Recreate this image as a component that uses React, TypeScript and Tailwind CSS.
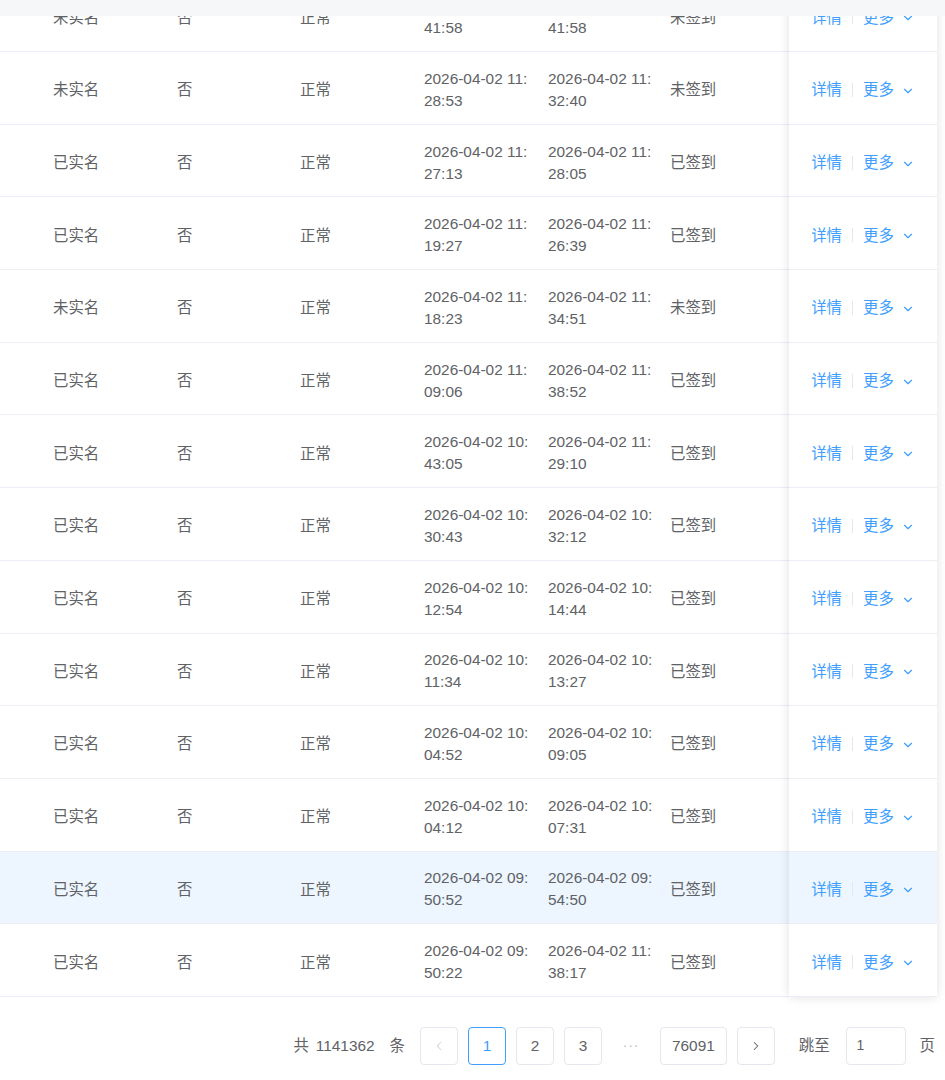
import { ChevronDown, ChevronLeft, ChevronRight } from "lucide-react";

type Row = {
  realName: string;
  flag: string;
  status: string;
  start: string;
  end: string;
  sign: string;
};

const rows: Row[] = [
  { realName: "未实名", flag: "否", status: "正常", start: "2026-04-02 11:41:58", end: "2026-04-02 11:41:58", sign: "未签到" },
  { realName: "未实名", flag: "否", status: "正常", start: "2026-04-02 11:28:53", end: "2026-04-02 11:32:40", sign: "未签到" },
  { realName: "已实名", flag: "否", status: "正常", start: "2026-04-02 11:27:13", end: "2026-04-02 11:28:05", sign: "已签到" },
  { realName: "已实名", flag: "否", status: "正常", start: "2026-04-02 11:19:27", end: "2026-04-02 11:26:39", sign: "已签到" },
  { realName: "未实名", flag: "否", status: "正常", start: "2026-04-02 11:18:23", end: "2026-04-02 11:34:51", sign: "未签到" },
  { realName: "已实名", flag: "否", status: "正常", start: "2026-04-02 11:09:06", end: "2026-04-02 11:38:52", sign: "已签到" },
  { realName: "已实名", flag: "否", status: "正常", start: "2026-04-02 10:43:05", end: "2026-04-02 11:29:10", sign: "已签到" },
  { realName: "已实名", flag: "否", status: "正常", start: "2026-04-02 10:30:43", end: "2026-04-02 10:32:12", sign: "已签到" },
  { realName: "已实名", flag: "否", status: "正常", start: "2026-04-02 10:12:54", end: "2026-04-02 10:14:44", sign: "已签到" },
  { realName: "已实名", flag: "否", status: "正常", start: "2026-04-02 10:11:34", end: "2026-04-02 10:13:27", sign: "已签到" },
  { realName: "已实名", flag: "否", status: "正常", start: "2026-04-02 10:04:52", end: "2026-04-02 10:09:05", sign: "已签到" },
  { realName: "已实名", flag: "否", status: "正常", start: "2026-04-02 10:04:12", end: "2026-04-02 10:07:31", sign: "已签到" },
  { realName: "已实名", flag: "否", status: "正常", start: "2026-04-02 09:50:52", end: "2026-04-02 09:54:50", sign: "已签到" },
  { realName: "已实名", flag: "否", status: "正常", start: "2026-04-02 09:50:22", end: "2026-04-02 11:38:17", sign: "已签到" },
];

// row that is highlighted (current row)
const HOVER = 12;

function DateCell({ value }: { value: string }) {
  return (
    <div className="leading-[22px]">
      <div>{value.slice(0, 14)}</div>
      <div>{value.slice(14)}</div>
    </div>
  );
}

function PageButton({ children, active, wide }: { children: React.ReactNode; active?: boolean; wide?: boolean }) {
  return (
    <div
      className={`flex h-[38px] items-center justify-center rounded-[4px] border bg-white ${wide ? "px-[11px]" : "w-[38px]"} ${
        active ? "border-[#409eff] text-[#409eff]" : "border-[#e4e7ed] text-[#606266]"
      }`}
    >
      {children}
    </div>
  );
}

export default function App() {
  return (
    <div
      className="relative h-[1080px] w-[945px] overflow-hidden bg-white text-[15.4px] text-[#606266]"
      style={{ fontFamily: '"Liberation Sans", "Noto Sans CJK SC", sans-serif' }}
    >
      <div className="absolute left-0 right-0 top-0 z-20 h-[16px] bg-[#f6f7f9]" />

      <div className="mt-[-20.7px] flex w-[937px]">
        <div className="min-w-0 flex-1 overflow-hidden">
          {rows.map((row, i) => (
            <div
              key={i}
              className={`flex h-[72.7px] items-center border-b border-[#ebeef5] pt-[4px] ${i === HOVER ? "bg-[#edf6ff]" : "bg-white"}`}
            >
              <div className="w-[42px] shrink-0" />
              <div className="w-[124px] shrink-0 pl-[11px]">{row.realName}</div>
              <div className="w-[123px] shrink-0 pl-[11px]">{row.flag}</div>
              <div className="w-[124px] shrink-0 pl-[11px]">{row.status}</div>
              <div className="w-[124px] shrink-0 pl-[11px]">
                <DateCell value={row.start} />
              </div>
              <div className="w-[122px] shrink-0 pl-[11px]">
                <DateCell value={row.end} />
              </div>
              <div className="flex-1 pl-[11px]">{row.sign}</div>
            </div>
          ))}
        </div>

        <div className="relative z-10 w-[148px] shrink-0 bg-white shadow-[0_0_10px_rgba(0,0,0,0.12)]">
          {rows.map((row, i) => (
            <div
              key={i}
              className={`flex h-[72.7px] items-center justify-center border-b border-[#ebeef5] pt-[4px] text-[#409eff] ${
                i === HOVER ? "bg-[#edf6ff]" : "bg-white"
              }`}
            >
              <span>详情</span>
              <span className="mx-[10px] h-[14px] w-px bg-[#e4e7ed]" />
              <span>更多</span>
              <ChevronDown size={14} strokeWidth={2} className="ml-[7px] mt-[2px]" />
            </div>
          ))}
        </div>
      </div>

      <div className="mt-[30px] flex items-center justify-end pr-[10px]">
        <span>共</span>
        <span className="ml-[7px] mr-[15px]">1141362</span>
        <span>条</span>
        <div className="ml-[15px] flex items-center gap-[10px]">
          <PageButton>
            <ChevronLeft size={14} strokeWidth={1.6} className="text-[#c0c4cc]" />
          </PageButton>
          <PageButton active>1</PageButton>
          <PageButton>2</PageButton>
          <PageButton>3</PageButton>
          <div className="flex h-[38px] w-[38px] items-center justify-center text-[14px] tracking-[1px] text-[#c0c4cc]">···</div>
          <PageButton wide>76091</PageButton>
          <PageButton>
            <ChevronRight size={14} strokeWidth={1.8} className="text-[#606266]" />
          </PageButton>
        </div>
        <span className="ml-[24px]">跳至</span>
        <div className="ml-[16px] flex h-[38px] w-[60px] items-center rounded-[4px] border border-[#e4e7ed] pl-[10px] text-[14px]">
          1
        </div>
        <span className="ml-[14px]">页</span>
      </div>
    </div>
  );
}
